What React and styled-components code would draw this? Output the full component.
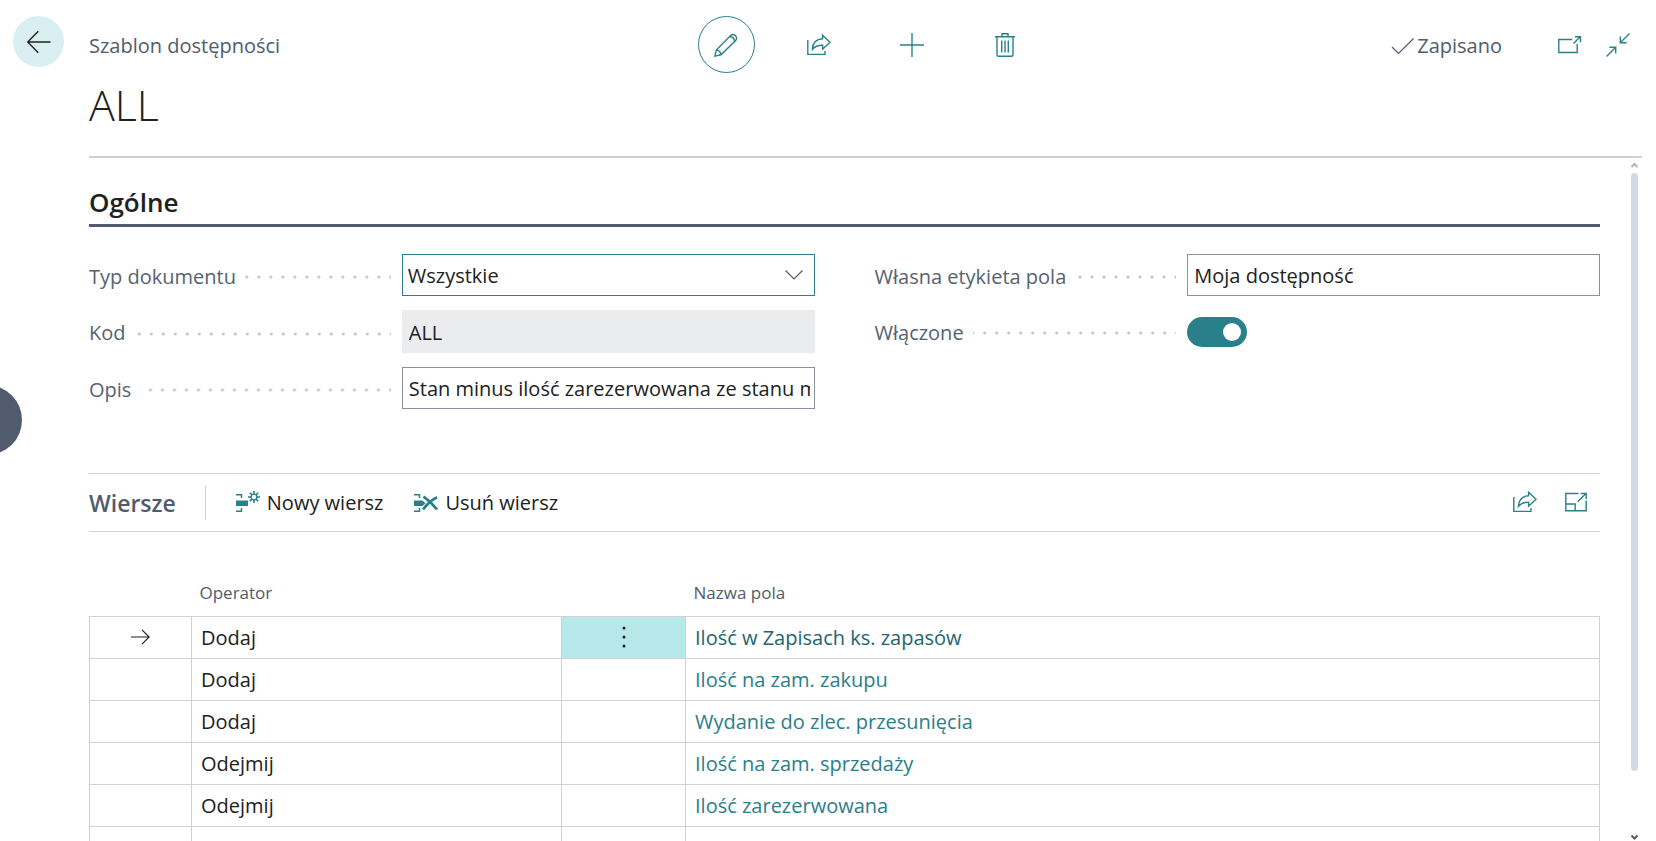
import React, { useState } from "react";
import styled, { createGlobalStyle, ThemeProvider } from "styled-components";

const theme = {
  font: '"Open Sans", "Noto Sans", sans-serif',
  accent: "#2a808a",
  accentDark: "#22656d",
  accentLight: "#b7e8ea",
  accentPale: "#daeff2",
  text: "#212121",
  textSecondary: "#505c6d",
  label: "#56626f",
  line: "#d0d2d6",
  dots: "#c2c4ca",
  headerLine: "#cbd1d7",
  inputBorder: "#8b8fa0",
  readonlyBg: "#ebecee",
  scrollThumb: "#d1dae3",
};

const GlobalStyle = createGlobalStyle`
  * {
    box-sizing: border-box;
  }
  body {
    margin: 0;
    background-color: #ffffff;
    color: ${(props) => props.theme.text};
    font-family: ${(props) => props.theme.font};
    font-size: 20px;
  }
  button, input, select {
    font: inherit;
    color: inherit;
  }
`;

const Page = styled.div`
  display: flex;
  flex-direction: column;
  height: 100vh;
  padding-right: 14px;
  overflow: hidden;
`;

const Header = styled.header`
  display: flex;
  flex-shrink: 0;
  padding-top: 16px;
`;

const BackColumn = styled.div`
  flex: 0 0 89px;
  padding-left: 13px;
`;

const IconButton = styled.button`
  display: flex;
  align-items: center;
  justify-content: center;
  padding: 0;
  border: none;
  background: transparent;
  color: ${(props) => props.theme.accent};
  cursor: pointer;
`;

const BackButton = styled(IconButton)`
  width: 51px;
  height: 51px;
  border-radius: 50%;
  background-color: ${(props) => props.theme.accentPale};
  color: ${(props) => props.theme.text};
`;

const ActionButton = styled(IconButton)`
  width: 57px;
  height: 57px;
  border-radius: 50%;
  border: ${(props) =>
    props.$active ? `1px solid ${props.theme.accent}` : "none"};
`;

const HeaderMain = styled.div`
  flex: 1;
  border-bottom: 2px solid ${(props) => props.theme.headerLine};
`;

const HeaderTop = styled.div`
  display: grid;
  grid-template-columns: 1fr auto 1fr;
  align-items: center;
`;

const Caption = styled.span`
  padding-top: 2px;
  color: ${(props) => props.theme.textSecondary};
`;

const Actions = styled.div`
  display: flex;
  gap: 36px;
`;

const HeaderRight = styled.div`
  display: flex;
  align-items: center;
  justify-content: flex-end;
  padding-right: 12px;
`;

const Saved = styled.span`
  display: flex;
  align-items: center;
  gap: 2px;
  margin-right: 56px;
  padding-top: 2px;
  color: ${(props) => props.theme.textSecondary};
`;

const WindowButtons = styled.div`
  display: flex;
  gap: 24px;
`;

const Title = styled.h1`
  margin: 0;
  padding: 6px 0 25px;
  font-size: 43px;
  font-weight: 300;
  line-height: 52px;
`;

const Body = styled.div`
  display: flex;
  flex: 1;
  min-height: 0;
  padding-left: 89px;
`;

const Content = styled.main`
  flex: 1;
  min-width: 0;
  padding-top: 26px;
  overflow: hidden;
`;

const SectionTitle = styled.h2`
  margin: 0;
  padding-bottom: 4px;
  border-bottom: 3px solid ${(props) => props.theme.textSecondary};
  font-size: 26px;
  font-weight: 600;
  line-height: 36px;
`;

const Fields = styled.div`
  display: grid;
  grid-template-columns: 1fr 1fr;
  gap: 60px;
  margin-top: 27px;
`;

const FieldColumn = styled.div`
  display: flex;
  flex-direction: column;
  gap: 14px;
`;

const FieldRow = styled.div`
  display: grid;
  grid-template-columns: 302fr 413fr;
  column-gap: 11px;
  align-items: center;
  min-height: 42px;
`;

const FieldLabel = styled.label`
  display: flex;
  align-items: center;
  gap: 9px;
  padding-top: 2px;
  color: ${(props) => props.theme.label};
  white-space: nowrap;

  &::after {
    content: "";
    flex: 1;
    height: 4px;
    margin-top: 2px;
    background-image: radial-gradient(
      circle,
      ${(props) => props.theme.dots} 1px,
      transparent 2px
    );
    background-size: 12px 4px;
    background-position: right -6px center;
  }
`;

const TextInput = styled.input`
  width: 100%;
  height: ${(props) => (props.readOnly ? 43 : 42)}px;
  padding: 1px 4px 0 6px;
  border: 1px solid
    ${(props) =>
      props.readOnly ? props.theme.readonlyBg : props.theme.inputBorder};
  border-radius: 0;
  background-color: ${(props) =>
    props.readOnly ? props.theme.readonlyBg : "#ffffff"};
  outline: none;
`;

const SelectBox = styled.div`
  display: grid;
  align-items: center;

  select,
  svg {
    grid-area: 1 / 1;
  }
  select {
    width: 100%;
    height: 42px;
    padding: 1px 5px 0;
    border: 1px solid ${(props) => props.theme.accent};
    border-radius: 0;
    background-color: #ffffff;
    appearance: none;
    outline: none;
  }
  svg {
    justify-self: end;
    margin-right: 12px;
    color: ${(props) => props.theme.textSecondary};
    pointer-events: none;
  }
`;

const Toggle = styled.input`
  display: flex;
  align-items: center;
  justify-content: ${(props) => (props.checked ? "flex-end" : "flex-start")};
  width: 60px;
  height: 30px;
  margin: 2px 0 0;
  padding: 0 6px;
  border-radius: 15px;
  background-color: ${(props) =>
    props.checked ? props.theme.accent : props.theme.inputBorder};
  appearance: none;
  cursor: pointer;

  &::before {
    content: "";
    width: 18px;
    height: 18px;
    border-radius: 50%;
    background-color: #ffffff;
  }
`;

const LinesBar = styled.div`
  display: flex;
  align-items: center;
  height: 59px;
  margin-top: 64px;
  border-top: 1px solid ${(props) => props.theme.line};
  border-bottom: 1px solid ${(props) => props.theme.line};
`;

const LinesTitle = styled.h2`
  margin: 0;
  padding-right: 29px;
  border-right: 1px solid ${(props) => props.theme.line};
  color: ${(props) => props.theme.textSecondary};
  font-size: 23px;
  font-weight: 600;
  line-height: 34px;
`;

const LineActions = styled.div`
  display: flex;
  flex: 1;
  gap: 31px;
  padding-left: 30px;
`;

const LineAction = styled.button`
  display: flex;
  align-items: center;
  gap: 7px;
  padding: 0;
  border: none;
  background: transparent;
  cursor: pointer;

  svg {
    color: ${(props) => props.theme.accent};
  }
`;

const LineTools = styled.div`
  display: flex;
  gap: 28px;
  padding: 0 13px 2px 0;
`;

const Table = styled.table`
  width: 100%;
  table-layout: fixed;
  border-collapse: collapse;

  th {
    height: 84px;
    padding: 0 8px 11px;
    color: ${(props) => props.theme.textSecondary};
    font-size: 17px;
    font-weight: 400;
    line-height: 24px;
    text-align: left;
    vertical-align: bottom;
  }
`;

const Col = styled.col`
  width: ${(props) => props.$width};
`;

const Cell = styled.td`
  height: 42px;
  padding: ${(props) => (props.$text ? "2px 9px 0" : "0 9px")};
  border: 1px solid ${(props) => props.theme.line};
  background-color: ${(props) =>
    props.$selected ? props.theme.accentLight : "transparent"};
  line-height: 28px;

  svg {
    display: block;
    margin: 0 auto;
  }
`;

const MoreButton = styled(IconButton)`
  width: 100%;
  color: ${(props) => props.theme.text};
`;

const FieldLink = styled.a`
  color: ${(props) =>
    props.$current ? props.theme.accentDark : props.theme.accent};
  text-decoration: none;
`;

const ScrollRail = styled.div`
  display: flex;
  flex-direction: column;
  flex: 0 0 7px;
  margin: 4px 4px 0 31px;
  color: #b4b4b4;

  svg:last-child {
    color: #5c5c5c;
  }
`;

const ScrollTrack = styled.div`
  flex: 1;
  margin: 4px 0;
`;

const ScrollThumb = styled.div`
  height: 91%;
  border-radius: 4px;
  background-color: ${(props) => props.theme.scrollThumb};
`;

const SideHandle = styled.button`
  position: fixed;
  top: calc(50% - 36px);
  left: -48px;
  width: 70px;
  height: 70px;
  padding: 0;
  border: none;
  border-radius: 50%;
  background-color: ${(props) => props.theme.textSecondary};
`;

const Icon = ({ width = 24, height = 24, stroke = 1.4, children }) => (
  <svg
    width={width}
    height={height}
    viewBox={`0 0 ${width} ${height}`}
    fill="none"
    stroke="currentColor"
    strokeWidth={stroke}
    aria-hidden="true"
  >
    {children}
  </svg>
);

const BackIcon = () => (
  <Icon>
    <path d="M23.500 12H.8M11.300 1.300L.7 12l10.600 10.700" />
  </Icon>
);

const PencilIcon = () => (
  <Icon>
    <path d="M.9 23.1L2.3 17 16.9 2.2a3.6 3.6 0 0 1 5 5L7 21.8zM2.3 17c2.500 0 4.700 2.200 4.700 4.800M15.600 3.500c2.600.2 4.800 2.300 5 5" />
  </Icon>
);

const ShareIcon = () => (
  <Icon>
    <path d="M.8 7v14.400h17.200V18M15.600 2.200l7.400 7-7.400 7v-4c-4.200-.2-7.300.7-10.200 4.200.3-6.200 4-10.200 10.200-10.600z" />
  </Icon>
);

const PlusIcon = () => (
  <Icon>
    <path d="M12 0v24M0 12h24" />
  </Icon>
);

const TrashIcon = () => (
  <Icon>
    <path d="M2 3.700h20M9 3.500V.7h6v2.800M4 4v17.800q0 1.500 1.500 1.500h13q1.500 0 1.500-1.500V4M8.700 7.500v12M12 7.500v12M15.300 7.500v12" />
  </Icon>
);

const CheckIcon = () => (
  <Icon height={18} stroke={1.2}>
    <path d="M1 10l6.500 6.500L22.500 1.500" />
  </Icon>
);

const PopOutIcon = () => (
  <Icon height={18}>
    <path d="M14.200 3.500H.8v13h18.400V8M15.500 7.500l6.700-6.700M17 .8h5.500v5.500" />
  </Icon>
);

const CollapseIcon = () => (
  <Icon>
    <path d="M23.500.5l-9 9M14.300 3.500v6.200h6.400M.5 23.500l9-9M3.300 14.300h6.400v6.200" />
  </Icon>
);

const ExpandIcon = () => (
  <Icon width={22} height={20}>
    <path d="M13.500 1.500H.8v17.200h20.400V8.500M.8 12h9.400v6.700M12.600 9.800l8.400-8.300M15.700 1.500h5.500V7" />
  </Icon>
);

const ChevronIcon = () => (
  <Icon width={18} height={10} stroke={1.2}>
    <path d="M.5.5L9 9 17.500.5" />
  </Icon>
);

const RowArrowIcon = () => (
  <Icon width={19} height={16} stroke={1.2}>
    <path d="M0 8h18M11 .8L18.200 8 11 15.200" />
  </Icon>
);

const MoreIcon = () => (
  <svg width="4" height="22" fill="currentColor" aria-hidden="true">
    <circle cx="2" cy="2" r="1.5" />
    <circle cx="2" cy="11" r="1.5" />
    <circle cx="2" cy="20" r="1.5" />
  </svg>
);

const LineBracket = () => (
  <path d="M0 4.700h5.500V8M0 21.300h5.500V18" strokeWidth="1.5" />
);

const NewLineIcon = () => (
  <Icon height={26}>
    <LineBracket />
    <path d="M0 10.500h12v5.500H0z" fill="currentColor" stroke="none" />
    <circle cx="18" cy="7" r="2.9" />
    <path
      d="M18 1v3M18 10v3M12 7h3M21 7h3M13.800 2.800l2.100 2.100M20.100 9.100l2.100 2.100M13.800 11.200l2.100-2.100M20.100 4.900l2.100-2.100"
      strokeWidth="1.6"
    />
  </Icon>
);

const DeleteLineIcon = () => (
  <Icon height={26}>
    <LineBracket />
    <path
      d="M0 10.500h8.500l3 2.700-3 2.800H0z"
      fill="currentColor"
      stroke="none"
    />
    <path
      d="M9.500 6.700c4.500 3 9.500 7.500 13.500 12.800M23 7.300c-5 2.500-10 7-14 12.200"
      strokeWidth="2.8"
    />
  </Icon>
);

const ScrollArrow = ({ down }) => (
  <Icon width={7} height={7} stroke={2}>
    <path d={down ? "M.5 1.500l3 3 3-3" : "M.5 5l3-3 3 3"} />
  </Icon>
);

const rows = [
  { id: 1, operator: "Dodaj", field: "Ilość w Zapisach ks. zapasów" },
  { id: 2, operator: "Dodaj", field: "Ilość na zam. zakupu" },
  { id: 3, operator: "Dodaj", field: "Wydanie do zlec. przesunięcia" },
  { id: 4, operator: "Odejmij", field: "Ilość na zam. sprzedaży" },
  { id: 5, operator: "Odejmij", field: "Ilość zarezerwowana" },
  { id: 6, operator: "", field: "" },
];

const PageHeader = () => (
  <Header>
    <BackColumn>
      <BackButton aria-label="Wstecz">
        <BackIcon />
      </BackButton>
    </BackColumn>
    <HeaderMain>
      <HeaderTop>
        <Caption>Szablon dostępności</Caption>
        <Actions>
          <ActionButton $active aria-label="Edytuj">
            <PencilIcon />
          </ActionButton>
          <ActionButton aria-label="Udostępnij">
            <ShareIcon />
          </ActionButton>
          <ActionButton aria-label="Nowy">
            <PlusIcon />
          </ActionButton>
          <ActionButton aria-label="Usuń">
            <TrashIcon />
          </ActionButton>
        </Actions>
        <HeaderRight>
          <Saved>
            <CheckIcon />
            Zapisano
          </Saved>
          <WindowButtons>
            <IconButton aria-label="Otwórz w nowym oknie">
              <PopOutIcon />
            </IconButton>
            <IconButton aria-label="Zwiń">
              <CollapseIcon />
            </IconButton>
          </WindowButtons>
        </HeaderRight>
      </HeaderTop>
      <Title>ALL</Title>
    </HeaderMain>
  </Header>
);

const GeneralFields = () => {
  const [description, setDescription] = useState(
    "Stan minus ilość zarezerwowana ze stanu minus"
  );
  const [caption, setCaption] = useState("Moja dostępność");
  const [enabled, setEnabled] = useState(true);

  return (
    <Fields>
      <FieldColumn>
        <FieldRow>
          <FieldLabel htmlFor="document-type">Typ dokumentu</FieldLabel>
          <SelectBox>
            <select id="document-type">
              <option>Wszystkie</option>
            </select>
            <ChevronIcon />
          </SelectBox>
        </FieldRow>
        <FieldRow>
          <FieldLabel htmlFor="code">Kod</FieldLabel>
          <TextInput id="code" value="ALL" readOnly />
        </FieldRow>
        <FieldRow>
          <FieldLabel htmlFor="description">Opis</FieldLabel>
          <TextInput
            id="description"
            value={description}
            onChange={(e) => setDescription(e.target.value)}
          />
        </FieldRow>
      </FieldColumn>
      <FieldColumn>
        <FieldRow>
          <FieldLabel htmlFor="caption">Własna etykieta pola</FieldLabel>
          <TextInput
            id="caption"
            value={caption}
            onChange={(e) => setCaption(e.target.value)}
          />
        </FieldRow>
        <FieldRow>
          <FieldLabel htmlFor="enabled">Włączone</FieldLabel>
          <Toggle
            id="enabled"
            type="checkbox"
            checked={enabled}
            onChange={(e) => setEnabled(e.target.checked)}
          />
        </FieldRow>
      </FieldColumn>
    </Fields>
  );
};

const Lines = () => {
  const [current, setCurrent] = useState(1);

  return (
    <section>
      <LinesBar>
        <LinesTitle>Wiersze</LinesTitle>
        <LineActions>
          <LineAction>
            <NewLineIcon />
            Nowy wiersz
          </LineAction>
          <LineAction>
            <DeleteLineIcon />
            Usuń wiersz
          </LineAction>
        </LineActions>
        <LineTools>
          <IconButton aria-label="Udostępnij wiersze">
            <ShareIcon />
          </IconButton>
          <IconButton aria-label="Rozwiń wiersze">
            <ExpandIcon />
          </IconButton>
        </LineTools>
      </LinesBar>
      <Table>
        <colgroup>
          <Col $width="102px" />
          <Col $width="370px" />
          <Col $width="124px" />
          <Col $width="auto" />
        </colgroup>
        <thead>
          <tr>
            <th />
            <th scope="col">Operator</th>
            <th />
            <th scope="col">Nazwa pola</th>
          </tr>
        </thead>
        <tbody>
          {rows.map(({ id, operator, field }) => (
            <tr key={id} onClick={() => setCurrent(id)}>
              <Cell>{id === current && <RowArrowIcon />}</Cell>
              <Cell $text>{operator}</Cell>
              <Cell $selected={id === current}>
                {id === current && (
                  <MoreButton aria-label="Pokaż więcej opcji">
                    <MoreIcon />
                  </MoreButton>
                )}
              </Cell>
              <Cell $text>
                {field && (
                  <FieldLink href="#" $current={id === current}>
                    {field}
                  </FieldLink>
                )}
              </Cell>
            </tr>
          ))}
        </tbody>
      </Table>
    </section>
  );
};

const App = () => (
  <ThemeProvider theme={theme}>
    <GlobalStyle />
    <Page>
      <PageHeader />
      <Body>
        <Content>
          <SectionTitle>Ogólne</SectionTitle>
          <GeneralFields />
          <Lines />
        </Content>
        <ScrollRail>
          <ScrollArrow />
          <ScrollTrack>
            <ScrollThumb />
          </ScrollTrack>
          <ScrollArrow down />
        </ScrollRail>
      </Body>
    </Page>
    <SideHandle aria-label="Pokaż panel" />
  </ThemeProvider>
);

export default App;
